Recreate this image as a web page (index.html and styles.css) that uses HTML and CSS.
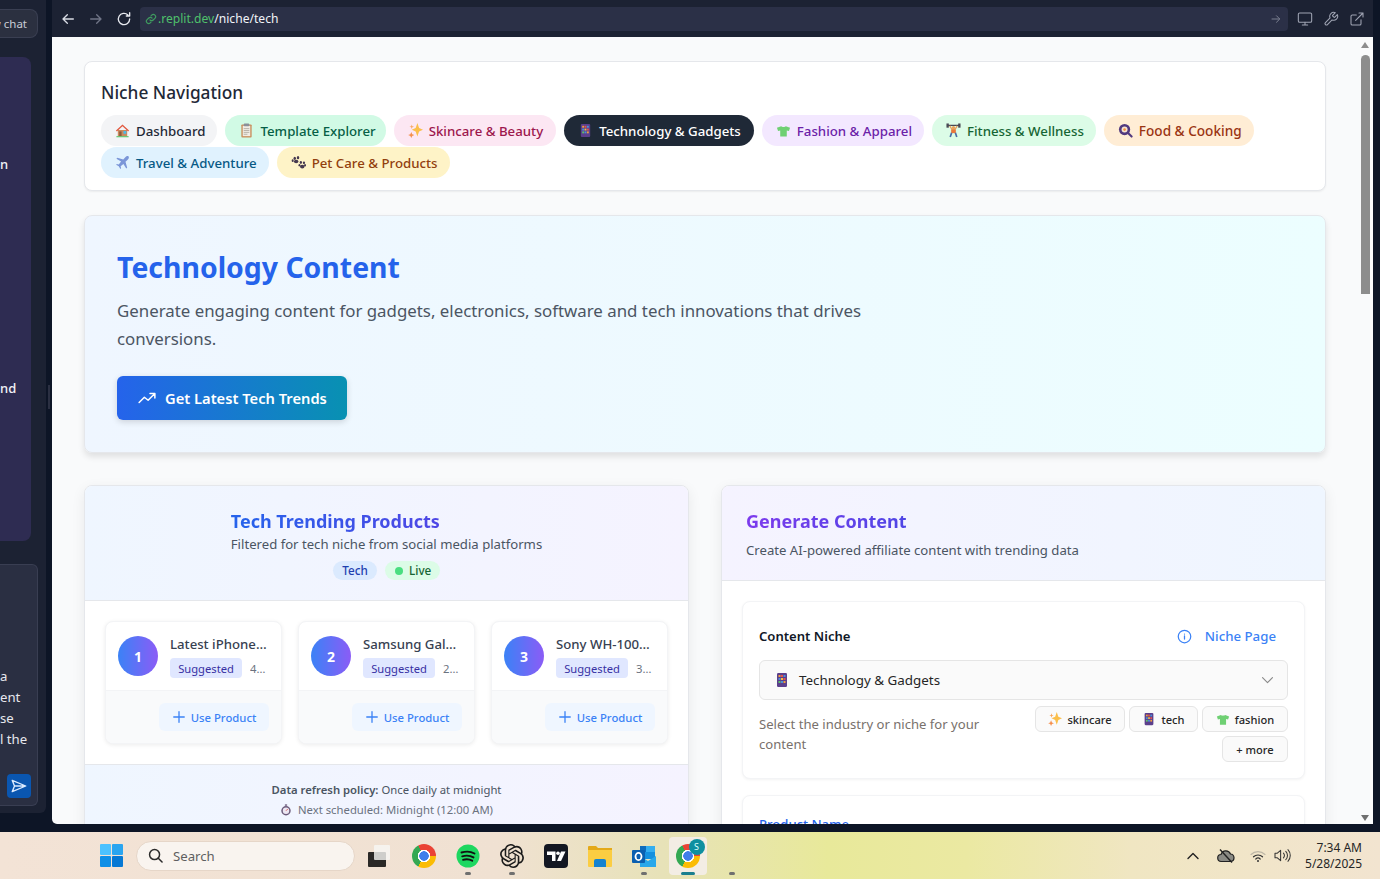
FILE: index.html
```html
<!DOCTYPE html>
<html lang="en">
<head>
<meta charset="utf-8">
<title>Technology Content</title>
<link rel="stylesheet" href="styles.css">
</head>
<body>
<svg class="defs" aria-hidden="true">
  <symbol id="e-house" viewBox="0 0 16 16"><path d="M3 7.5h10V14H3z" fill="#c98a5e"/><path d="M8 1.5 1 8l1 1 6-5.5L14 9l1-1z" fill="#e2593f"/><rect x="9" y="8.5" width="3" height="3" fill="#4cb8e8"/><rect x="4.5" y="9" width="2.5" height="5" fill="#8b5a3c"/><rect x="1.5" y="14" width="13" height="1.2" fill="#5cc46a"/></symbol>
  <symbol id="e-clip" viewBox="0 0 16 16"><rect x="2.5" y="1.5" width="11" height="14" rx="1" fill="#c9905f"/><rect x="4" y="3" width="8" height="11" fill="#f1ece4"/><rect x="5" y=".5" width="6" height="3" rx="1" fill="#8a8f99"/><path d="M5 6h6M5 8h6M5 10h6M5 12h4" stroke="#b5b0a8" stroke-width="1"/></symbol>
  <symbol id="e-spark" viewBox="0 0 16 16"><path d="M10 0 11.800 5.400 16 7.200 11.800 9 10 14.500 8.200 9 4 7.200 8.200 5.400z" fill="#fbbf4a"/><path d="M3.500 9.500 4.500 12l2.300.8-2.300 1-1 2.200-1-2.200-2.300-1 2.300-.8z" fill="#f58f4d"/><path d="M4 1.500l.6 1.900 1.900.6-1.900.6L4 6.500l-.6-1.900L1.500 4l1.900-.6z" fill="#f9a45c"/></symbol>
  <symbol id="e-tech" viewBox="0 0 16 16"><rect x="3" y="1" width="10" height="14" rx="1.200" fill="#5b3f8c"/><rect x="4.500" y="3" width="2" height="2" fill="#f0a03c"/><rect x="7" y="3" width="2" height="2" fill="#e5534b"/><rect x="9.500" y="3" width="2" height="2" fill="#4a90d9"/><rect x="4.500" y="6" width="2" height="2" fill="#4a90d9"/><rect x="7" y="6" width="2" height="2" fill="#f0c040"/><rect x="9.500" y="6" width="2" height="2" fill="#e5534b"/><rect x="4.500" y="9" width="2" height="2" fill="#5cc46a"/><rect x="7" y="9" width="2" height="2" fill="#4a90d9"/><rect x="9.500" y="9" width="2" height="2" fill="#f0a03c"/></symbol>
  <symbol id="e-shirt" viewBox="0 0 16 16"><path d="M5.500 3.500 1 5 2.200 8.500 4.500 8v6.500h7V8l2.300.5L15 5l-4.500-1.500c-.8 1-4.200 1-5 0z" fill="#6fd073"/></symbol>
  <symbol id="e-lift" viewBox="0 0 16 16"><path d="M1 2.500h14" stroke="#4a4a55" stroke-width="1.400"/><rect x="0.500" y="0.500" width="2.500" height="4.500" fill="#4a4a55"/><rect x="13" y="0.500" width="2.500" height="4.500" fill="#4a4a55"/><circle cx="8" cy="5" r="1.800" fill="#e8a25c"/><path d="M4 3l2.500 4h3L12 3" stroke="#e8a25c" stroke-width="1.400" fill="none"/><rect x="5.500" y="7" width="5" height="3.800" fill="#e9773c"/><path d="M6 10.500 4.500 15M10 10.500l1.500 4.500" stroke="#4a6ea8" stroke-width="1.800"/></symbol>
  <symbol id="e-pan" viewBox="0 0 16 16"><circle cx="7" cy="7" r="6" fill="#51397f"/><circle cx="7" cy="7" r="3.200" fill="#f4e3d0"/><circle cx="7" cy="7" r="1.400" fill="#f58f3d"/><path d="m11 11 3.500 3.500" stroke="#51397f" stroke-width="2.200" stroke-linecap="round"/></symbol>
  <symbol id="e-plane" viewBox="0 0 16 16"><path d="M14.500 1.500c-1-.8-2.500 0-3.500 1L8.800 4.800 2.500 3 1.500 4l5 3L4 10l-2-.5-.8.8 2.800 1.700L5.700 14.800l.8-.8-.5-2 3-2.500 3 5 1-1-1.800-6.300L13.500 5c1-1 1.800-2.500 1-3.500z" fill="#7b96d8"/></symbol>
  <symbol id="e-paw" viewBox="0 0 16 16"><g fill="#46394f"><ellipse cx="4" cy="3.500" rx="1.300" ry="1.700"/><ellipse cx="7.500" cy="2.800" rx="1.300" ry="1.700"/><ellipse cx="1.800" cy="6" rx="1.100" ry="1.400"/><ellipse cx="5.500" cy="7" rx="2.400" ry="1.900"/><ellipse cx="10.500" cy="8" rx="1.200" ry="1.500"/><ellipse cx="13.800" cy="8.300" rx="1.200" ry="1.500"/><ellipse cx="9" cy="10.800" rx="1" ry="1.300"/><ellipse cx="15" cy="11" rx="1" ry="1.300"/><ellipse cx="12" cy="12.300" rx="2.400" ry="2"/></g></symbol>
  <symbol id="e-watch" viewBox="0 0 16 16"><rect x="6.500" y="0.500" width="3" height="1.800" fill="#6b5b7b"/><circle cx="8" cy="9" r="6.300" fill="#6b5b7b"/><circle cx="8" cy="9" r="4.300" fill="#ece6f2"/><path d="M8 9 10.500 6.500" stroke="#d9534f" stroke-width="1.200"/></symbol>
</svg>

<div class="workspace">
  <aside class="rail">
    <div class="chat-btn"><span class="chat-label">New chat</span></div>
    <div class="rail-panel"><p class="rail-line rail-line-a">n</p><p class="rail-line rail-line-b">nd</p></div>
    <div class="rail-box">
      <p class="rail-text">a<br>ent<br>se<br>l the</p>
      <span class="send">
        <svg class="send-icon" viewBox="0 0 24 24" fill="none" stroke="#dbeafe" stroke-width="1.800" stroke-linejoin="round"><path d="M3 4.500 21 12 3 19.500 6 12zM6 12h15"/></svg>
      </span>
    </div>
  </aside>
  <div class="gutter"><span class="handle"></span></div>
  <main class="browser">
    <header class="toolbar">
      <svg class="tb-icon tb-back" viewBox="0 0 24 24" fill="none" stroke="#d8dbe4" stroke-width="2" stroke-linecap="round" stroke-linejoin="round"><path d="M20 12H5M11 5.500 4.500 12l6.500 6.500"/></svg>
      <svg class="tb-icon tb-fwd" viewBox="0 0 24 24" fill="none" stroke="#6f7486" stroke-width="2" stroke-linecap="round" stroke-linejoin="round"><path d="M4 12h15M13 5.500l6.500 6.500-6.500 6.500"/></svg>
      <svg class="tb-icon tb-reload" viewBox="0 0 24 24" fill="none" stroke="#e8eaf0" stroke-width="2" stroke-linecap="round" stroke-linejoin="round"><path d="M20.500 12a8.500 8.500 0 1 1-2.600-6.100M20.500 2.500v5h-5"/></svg>
      <div class="urlbar">
        <svg class="url-link" viewBox="0 0 24 24" fill="none" stroke="#3f9a5f" stroke-width="2.400" stroke-linecap="round"><path d="M10 14a4.500 4.500 0 0 0 6.400 0l3.400-3.400a4.500 4.500 0 0 0-6.400-6.400L12 5.600M14 10a4.500 4.500 0 0 0-6.400 0l-3.400 3.400a4.500 4.500 0 0 0 6.400 6.400l1.400-1.400"/></svg>
        <span class="url-host">.replit.dev</span><span class="url-path">/niche/tech</span>
        <svg class="url-go" viewBox="0 0 24 24" fill="none" stroke="#7a7f90" stroke-width="2" stroke-linecap="round" stroke-linejoin="round"><path d="M4 12h15M13 5.500l6.500 6.500-6.500 6.500"/></svg>
      </div>
      <svg class="tb-icon tb-tool" viewBox="0 0 24 24" fill="none" stroke="#9fa4b3" stroke-width="1.600" stroke-linecap="round" stroke-linejoin="round"><rect x="2" y="3" width="20" height="14" rx="2"/><path d="M12 17v4M8 21h8"/></svg>
      <svg class="tb-icon tb-tool" viewBox="0 0 24 24" fill="none" stroke="#9fa4b3" stroke-width="1.600" stroke-linecap="round" stroke-linejoin="round"><path d="M14.700 6.300a1 1 0 0 0 0 1.400l1.600 1.600a1 1 0 0 0 1.400 0l3.800-3.800a6 6 0 0 1-7.900 7.900l-6.900 6.900a2.100 2.100 0 0 1-3-3l6.900-6.900a6 6 0 0 1 7.900-7.900z"/></svg>
      <svg class="tb-icon tb-tool" viewBox="0 0 24 24" fill="none" stroke="#9fa4b3" stroke-width="1.600" stroke-linecap="round" stroke-linejoin="round"><path d="M18 13v6a2 2 0 0 1-2 2H5a2 2 0 0 1-2-2V8a2 2 0 0 1 2-2h6M15 3h6v6M10 14 21 3"/></svg>
    </header>

    <div class="page">
      <div class="content">
        <section class="nav-card">
          <h2 class="nav-title">Niche Navigation</h2>
          <nav class="pills">
            <a class="pill pill-gray"><svg class="emo"><use href="#e-house"/></svg>Dashboard</a>
            <a class="pill pill-teal"><svg class="emo"><use href="#e-clip"/></svg>Template Explorer</a>
            <a class="pill pill-pink"><svg class="emo"><use href="#e-spark"/></svg>Skincare &amp; Beauty</a>
            <a class="pill pill-dark"><svg class="emo"><use href="#e-tech"/></svg>Technology &amp; Gadgets</a>
            <a class="pill pill-purple"><svg class="emo"><use href="#e-shirt"/></svg>Fashion &amp; Apparel</a>
            <a class="pill pill-green"><svg class="emo"><use href="#e-lift"/></svg>Fitness &amp; Wellness</a>
            <a class="pill pill-orange"><svg class="emo"><use href="#e-pan"/></svg>Food &amp; Cooking</a>
            <a class="pill pill-blue"><svg class="emo"><use href="#e-plane"/></svg>Travel &amp; Adventure</a>
            <a class="pill pill-amber"><svg class="emo"><use href="#e-paw"/></svg>Pet Care &amp; Products</a>
          </nav>
        </section>

        <section class="hero">
          <h1 class="hero-title">Technology Content</h1>
          <p class="hero-text">Generate engaging content for gadgets, electronics, software and tech innovations that drives conversions.</p>
          <button class="hero-btn">
            <svg class="hero-icon" viewBox="0 0 24 24" fill="none" stroke="#fff" stroke-width="2" stroke-linecap="round" stroke-linejoin="round"><path d="m1.500 18 7-7 5 4 9-9M16 6h6.500v6"/></svg>
            Get Latest Tech Trends
          </button>
        </section>

        <div class="columns">
          <section class="panel">
            <header class="panel-head head-left">
              <div class="head-inner">
                <h3 class="panel-title title-blue">Tech Trending Products</h3>
                <p class="panel-sub">Filtered for tech niche from social media platforms</p>
              </div>
              <div class="tags">
                <span class="tag tag-tech">Tech</span>
                <span class="tag tag-live"><i class="live-dot"></i>Live</span>
              </div>
            </header>
            <div class="products">
              <article class="product">
                <div class="product-main">
                  <span class="rank">1</span>
                  <div class="product-info">
                    <div class="product-name">Latest iPhone 15 Pro Max</div>
                    <div class="product-meta"><span class="suggested">Suggested</span><span class="views">4.2M views</span></div>
                  </div>
                </div>
                <div class="product-foot"><button class="use-btn"><svg class="plus" viewBox="0 0 16 16" fill="none" stroke="#3b82f6" stroke-width="1.500" stroke-linecap="round"><path d="M8 2v12M2 8h12"/></svg>Use Product</button></div>
              </article>
              <article class="product">
                <div class="product-main">
                  <span class="rank">2</span>
                  <div class="product-info">
                    <div class="product-name">Samsung Galaxy S24 Ultra</div>
                    <div class="product-meta"><span class="suggested">Suggested</span><span class="views">2.8M views</span></div>
                  </div>
                </div>
                <div class="product-foot"><button class="use-btn"><svg class="plus" viewBox="0 0 16 16" fill="none" stroke="#3b82f6" stroke-width="1.500" stroke-linecap="round"><path d="M8 2v12M2 8h12"/></svg>Use Product</button></div>
              </article>
              <article class="product">
                <div class="product-main">
                  <span class="rank">3</span>
                  <div class="product-info">
                    <div class="product-name">Sony WH-1000XM5 Headphones</div>
                    <div class="product-meta"><span class="suggested">Suggested</span><span class="views">3.1M views</span></div>
                  </div>
                </div>
                <div class="product-foot"><button class="use-btn"><svg class="plus" viewBox="0 0 16 16" fill="none" stroke="#3b82f6" stroke-width="1.500" stroke-linecap="round"><path d="M8 2v12M2 8h12"/></svg>Use Product</button></div>
              </article>
            </div>
            <footer class="policy">
              <p class="policy-line"><b class="policy-b">Data refresh policy:</b> Once daily at midnight</p>
              <p class="policy-next"><svg class="emo-sm"><use href="#e-watch"/></svg>Next scheduled: Midnight (12:00 AM)</p>
            </footer>
          </section>

          <section class="panel">
            <header class="panel-head head-right">
              <h3 class="panel-title title-purple">Generate Content</h3>
              <p class="panel-sub sub-gap">Create AI-powered affiliate content with trending data</p>
            </header>
            <div class="form">
              <div class="field">
                <div class="field-top">
                  <span class="field-label">Content Niche</span>
                  <a class="niche-link"><svg class="info" viewBox="0 0 24 24" fill="none" stroke="#3b82f6" stroke-width="2" stroke-linecap="round"><circle cx="12" cy="12" r="10"/><path d="M12 16v-5M12 8h.01"/></svg>Niche Page</a>
                </div>
                <div class="select">
                  <svg class="emo-sel"><use href="#e-tech"/></svg>
                  <span class="select-text">Technology &amp; Gadgets</span>
                  <svg class="chev" viewBox="0 0 24 24" fill="none" stroke="#8a8a8a" stroke-width="1.600" stroke-linecap="round" stroke-linejoin="round"><path d="m5 8 7 7 7-7"/></svg>
                </div>
                <div class="field-bottom">
                  <p class="help">Select the industry or niche for your content</p>
                  <div class="quick">
                    <span class="chip chip-skin"><svg class="emo-chip"><use href="#e-spark"/></svg>skincare</span>
                    <span class="chip chip-tech"><svg class="emo-chip"><use href="#e-tech"/></svg>tech</span>
                    <span class="chip chip-fashion"><svg class="emo-chip"><use href="#e-shirt"/></svg>fashion</span>
                    <span class="chip chip-more">+ more</span>
                  </div>
                </div>
              </div>
              <div class="field">
                <span class="field-label label-blue">Product Name</span>
              </div>
            </div>
          </section>
        </div>
      </div>
      <div class="scrollbar">
        <span class="arrow-up"></span>
        <span class="thumb"></span>
        <span class="arrow-down"></span>
      </div>
    </div>
  </main>
</div>

<footer class="taskbar">
  <svg class="winlogo" viewBox="0 0 23 23"><rect width="11" height="11" rx="1" fill="#4cc2ff"/><rect x="12" width="11" height="11" rx="1" fill="#2aa5f0"/><rect y="12" width="11" height="11" rx="1" fill="#0f8fe6"/><rect x="12" y="12" width="11" height="11" rx="1" fill="#0678d4"/></svg>
  <div class="search">
    <svg class="search-icon" viewBox="0 0 24 24" fill="none" stroke="#2b2b2b" stroke-width="2.400" stroke-linecap="round"><circle cx="10.500" cy="10.500" r="8"/><path d="m16.500 16.500 6 6"/></svg>
    <span class="search-text">Search</span>
  </div>
  <svg class="taskview" viewBox="0 0 22 22"><rect x="0" y="7" width="18" height="15" rx="1" fill="#2a2826"/><rect x="6" y="0" width="16" height="15" rx="1" fill="#f7f7f5" opacity=".8"/></svg>
  <div class="apps">
    <div class="app"><span class="chrome"></span></div>
    <div class="app app-dot">
      <svg class="app-icon" viewBox="0 0 24 24"><circle cx="12" cy="12" r="11.500" fill="#1ed760"/><path d="M5.500 8.500c4.500-1.300 9.500-1 13 1M6.200 12.300c3.800-1 8-.8 11.300 1.100M7 15.800c3.200-.8 6.500-.6 9.200.9" stroke="#111" stroke-width="1.900" stroke-linecap="round" fill="none"/></svg>
    </div>
    <div class="app app-dot">
      <svg class="app-icon" viewBox="0 0 24 24"><path fill="#1b1b1b" d="M22.2819 9.8211a5.9847 5.9847 0 0 0-.5157-4.9108 6.0462 6.0462 0 0 0-6.5098-2.9A6.0651 6.0651 0 0 0 4.9807 4.1818a5.9847 5.9847 0 0 0-3.9977 2.9 6.0462 6.0462 0 0 0 .7427 7.0966 5.98 5.98 0 0 0 .511 4.9107 6.051 6.051 0 0 0 6.5146 2.9001A5.9847 5.9847 0 0 0 13.2599 24a6.0557 6.0557 0 0 0 5.7718-4.2058 5.9894 5.9894 0 0 0 3.9977-2.9001 6.0557 6.0557 0 0 0-.7475-7.0729zm-9.022 12.6081a4.4755 4.4755 0 0 1-2.8764-1.0408l.1419-.0804 4.7783-2.7582a.7948.7948 0 0 0 .3927-.6813v-6.7369l2.02 1.1686a.071.071 0 0 1 .038.052v5.5826a4.504 4.504 0 0 1-4.4945 4.4944zm-9.6607-4.1254a4.4708 4.4708 0 0 1-.5346-3.0137l.142.0852 4.783 2.7582a.7712.7712 0 0 0 .7806 0l5.8428-3.3685v2.3324a.0804.0804 0 0 1-.0332.0615L9.74 19.9502a4.4992 4.4992 0 0 1-6.1408-1.6464zM2.3408 7.8956a4.485 4.485 0 0 1 2.3655-1.9728V11.6a.7664.7664 0 0 0 .3879.6765l5.8144 3.3543-2.0201 1.1685a.0757.0757 0 0 1-.071 0l-4.8303-2.7865A4.504 4.504 0 0 1 2.3408 7.872zm16.5963 3.8558L13.1038 8.364 15.1192 7.2a.0757.0757 0 0 1 .071 0l4.8303 2.7913a4.4944 4.4944 0 0 1-.6765 8.1042v-5.6772a.79.79 0 0 0-.407-.667zm2.0107-3.0231l-.142-.0852-4.7735-2.7818a.7759.7759 0 0 0-.7854 0L9.409 9.2297V6.8974a.0662.0662 0 0 1 .0284-.0615l4.8303-2.7866a4.4992 4.4992 0 0 1 6.6802 4.66zM8.3065 12.863l-2.02-1.1638a.0804.0804 0 0 1-.038-.0567V6.0742a4.4992 4.4992 0 0 1 7.3757-3.4537l-.142.0805L8.704 5.459a.7948.7948 0 0 0-.3927.6813zm1.0976-2.3654l2.602-1.4998 2.6069 1.4998v2.9994l-2.5974 1.4997-2.6067-1.4997Z"/></svg>
    </div>
    <div class="app">
      <svg class="app-icon" viewBox="0 0 24 24"><rect width="24" height="24" rx="4" fill="#131722"/><path d="M3 7.500h8.500V17H8v-6H3z" fill="#fff"/><circle cx="14" cy="9.300" r="1.800" fill="#fff"/><path d="M17 7.500h4.500L17 17h-4z" fill="#fff"/></svg>
    </div>
    <div class="app">
      <svg class="app-icon" viewBox="0 0 24 24"><path d="M0 3a1 1 0 0 1 1-1h7l2 2h14v4H0z" fill="#e4a917"/><path d="M0 6h24v16a1 1 0 0 1-1 1H1a1 1 0 0 1-1-1z" fill="#fbcd42"/><path d="M6 17a2 2 0 0 1 2-2h8a2 2 0 0 1 2 2v6H6z" fill="#1483d0"/></svg>
    </div>
    <div class="app app-dot">
      <svg class="app-icon" viewBox="0 0 24 24"><path d="M8 2h15v13H8z" fill="#1490df"/><path d="M14 2h9v6h-9z" fill="#33aef0"/><path d="M8 2h6v6H8z" fill="#0f6cbd"/><path d="M8 12l8 5 8-5v11H8z" fill="#28a8ea"/><rect x="0" y="6" width="13" height="13" rx="1" fill="#0a5fb0"/><ellipse cx="6.500" cy="12.500" rx="3" ry="3.600" fill="none" stroke="#fff" stroke-width="1.800"/></svg>
    </div>
    <div class="app app-active">
      <span class="tile"><span class="chrome"></span><span class="bubble">S</span></span>
      <i class="active-bar"></i>
    </div>
    <div class="app app-dot"></div>
  </div>
  <div class="tray">
    <svg class="tray-chev" viewBox="0 0 12 8" fill="none" stroke="#222" stroke-width="1.400" stroke-linecap="round" stroke-linejoin="round"><path d="m1 6.500 5-5 5 5"/></svg>
    <svg class="tray-cloud" viewBox="0 0 18 16"><path d="M4.500 13.500a3.500 3.500 0 0 1-.5-7A5 5 0 0 1 13.500 6a3.800 3.800 0 0 1 .5 7.500z" fill="#8a8a84" stroke="#222" stroke-width="1.200"/><path d="m3 1.500 12 13" stroke="#222" stroke-width="1.400"/></svg>
    <svg class="tray-wifi" viewBox="0 0 16 14" fill="none" stroke-linecap="round"><path d="M1 5.500a10 10 0 0 1 14 0" stroke="#bdb6a6" stroke-width="1.100"/><path d="M3.500 7.800a6.500 6.500 0 0 1 9 0" stroke="#333" stroke-width="1.200"/><path d="M5.800 10a3.200 3.200 0 0 1 4.400 0" stroke="#333" stroke-width="1.200"/><circle cx="8" cy="12" r="1" fill="#333"/></svg>
    <svg class="tray-sound" viewBox="0 0 18 16" fill="none" stroke="#333" stroke-width="1.100" stroke-linecap="round" stroke-linejoin="round"><path d="M1 5.500v5h2.500l3.500 3V2.500L3.500 5.500zM10 5.500a3.500 3.500 0 0 1 0 5M12.500 3.500a6.500 6.500 0 0 1 0 9M14.800 1.800a9 9 0 0 1 0 12.400"/></svg>
    <div class="clock"><span>7:34 AM</span><span>5/28/2025</span></div>
  </div>
</footer>
</body>
</html>
```

FILE: styles.css
```css
* { box-sizing: border-box; }
html, body { margin: 0; padding: 0; }
body {
  width: 1380px; height: 879px; overflow: hidden;
  background: #0d1526;
  font-family: "Noto Sans", "Open Sans", sans-serif;
  display: flex; flex-direction: column;
  color: #1f2937;
}
p, h1, h2, h3 { margin: 0; }
button { font-family: inherit; border: 0; cursor: pointer; }
.defs { width: 0; height: 0; position: absolute; }

.workspace { height: 832px; display: flex; padding-bottom: 8px; flex: none; }

/* left rail */
.rail { width: 46px; height: 813px; background: #1c2233; border-bottom-right-radius: 6px; display: flex; flex-direction: column; padding-top: 9px; overflow: hidden; flex: none; }
.chat-btn { width: 38px; height: 29px; background: #2b3040; border: 1px solid #3a3f52; border-left: 0; border-radius: 0 8px 8px 0; display: flex; justify-content: flex-end; align-items: center; padding-right: 10px; overflow: hidden; flex: none; }
.chat-label { font-size: 11.500px; color: #c9ccd6; white-space: nowrap; flex: none; }
.rail-panel { width: 31px; height: 484px; margin-top: 19px; background: #2e2c52; border-radius: 0 8px 8px 0; flex: none; overflow: hidden; }
.rail-line { font-size: 13px; font-weight: 500; line-height: 20px; color: #f1f2f6; }
.rail-line-a { margin-top: 97px; }
.rail-line-b { margin-top: 204px; }
.rail-box { width: 38px; height: 242px; margin-top: 23px; background: #2a2f42; border: 1px solid #393e52; border-left: 0; border-radius: 0 6px 6px 0; flex: none; display: flex; flex-direction: column; }
.rail-text { font-size: 13.200px; line-height: 21px; color: #e7e8ee; margin-top: 101px; white-space: nowrap; }
.send { width: 24px; height: 24px; margin: 24px 0 0 7px; background: #0a56b0; border-radius: 4px; display: flex; align-items: center; justify-content: center; }
.send-icon { width: 18px; height: 18px; }
.gutter { width: 6px; padding: 385px 2px 0; flex: none; }
.handle { display: block; width: 2px; height: 24px; background: #2b3042; }

/* browser */
.browser { width: 1321px; display: flex; flex-direction: column; flex: none; }
.toolbar { height: 37px; background: #1c2233; display: flex; align-items: center; padding-left: 8px; flex: none; }
.tb-icon { width: 16px; height: 16px; flex: none; }
.tb-fwd { margin-left: 12px; }
.tb-reload { margin-left: 12px; }
.urlbar { width: 1148px; height: 24px; margin: 0 9px 0 8px; background: #2b3047; border-radius: 4px; display: flex; align-items: center; padding: 0 6px 0 5px; font-size: 12.100px; flex: none; }
.url-link { width: 12px; height: 12px; margin-right: 1px; flex: none; }
.url-host { color: #4fc16b; }
.url-path { color: #f2f4f8; }
.url-go { width: 12px; height: 12px; margin-left: auto; }
.tb-tool { margin-right: 10px; }

.page { flex: 1; min-height: 0; background: #f9fafb; display: flex; border-bottom-left-radius: 5px; overflow: hidden; }
.content { width: 1309px; padding: 24px 35px 0 32px; flex: none; }

/* scrollbar */
.scrollbar { width: 12px; display: flex; flex-direction: column; align-items: flex-start; padding-top: 5px; flex: none; }
.arrow-up { width: 0; height: 0; border-left: 4.500px solid transparent; border-right: 4.500px solid transparent; border-bottom: 6px solid #8d8d8d; }
.thumb { display: block; width: 9px; height: 239px; margin-top: 7px; background: #8d8d8d; border-radius: 5px 5px 0 0; }
.arrow-down { width: 0; height: 0; margin-top: auto; margin-bottom: 3px; border-left: 4.500px solid transparent; border-right: 4.500px solid transparent; border-top: 6px solid #6f6f6f; }

/* nav */
.nav-card { height: 130px; background: #fff; border: 1px solid #e5e7eb; border-radius: 8px; padding: 16px 16px 12px; box-shadow: 0 1px 2px rgba(0,0,0,.06); }
.nav-title { height: 28px; padding-top: 1px; font-size: 17.300px; font-weight: 500; line-height: 28px; color: #1f2937; margin-bottom: 9px; }
.pills { display: flex; flex-wrap: wrap; gap: 1px 8px; }
.pill { height: 31px; border-radius: 16px; padding: 0 12px 0 14px; display: flex; align-items: center; font-size: 13.250px; font-weight: 500; white-space: nowrap; }
.emo { width: 15px; height: 15px; margin-right: 6px; flex: none; }
.pill-gray { background: #f3f4f6; color: #1f2937; }
.pill-teal { background: #d1fae5; color: #065f46; padding-right: 10px; }
.pill-pink { background: #fce7f3; color: #9d174d; padding-right: 13px; }
.pill-dark { background: #1f2937; color: #fff; padding-right: 13px; }
.pill-purple { background: #f3e8ff; color: #6b21a8; }
.pill-green { background: #dcfce7; color: #166534; }
.pill-orange { background: #ffedd5; color: #9a3412; font-size: 13.600px; }
.pill-blue { background: #e0f2fe; color: #075985; }
.pill-amber { background: #fef3c7; color: #92400e; }

/* hero */
.hero { height: 238px; margin-top: 24px; padding: 32px; background: linear-gradient(90deg, #eff6ff, #ecfeff); border: 1px solid #e5e7eb; border-radius: 8px; box-shadow: 0 4px 6px rgba(0,0,0,.1); }
.hero-title { font-size: 28.400px; line-height: 36px; font-weight: 700; color: #2563eb; margin-bottom: 13px; padding-top: 1px; height: 36px; }
.hero-text { width: 768px; font-size: 16.850px; line-height: 28px; color: #4b5563; margin-bottom: 23px; }
.hero-btn { width: 230px; height: 44px; border-radius: 6px; background: linear-gradient(90deg, #2563eb, #0891b2); color: #fff; font-size: 14.700px; font-weight: 600; display: flex; align-items: center; padding: 0 0 0 21px; box-shadow: 0 2px 6px rgba(0,0,0,.15); }
.hero-icon { width: 18px; height: 18px; margin-right: 9px; }

/* columns */
.columns { display: grid; grid-template-columns: 605px 605px; gap: 32px; margin-top: 32px; }
.panel { background: #fff; border: 1px solid #e5e7eb; border-radius: 8px; box-shadow: 0 4px 14px rgba(0,0,0,.07); height: 420px; overflow: hidden; }
.panel-head { border-bottom: 1px solid #e5e7eb; }
.head-left { height: 115px; padding-top: 22px; display: flex; flex-direction: column; align-items: center; background: linear-gradient(90deg, #eff6ff, #f5f3ff); }
.head-inner { display: inline-block; }
.head-right { height: 95px; padding: 22px 24px 0; background: linear-gradient(90deg, #f5f3ff, #eff6ff); }
.panel-title { font-size: 18px; line-height: 26px; font-weight: 700; color: transparent; -webkit-background-clip: text; background-clip: text; width: max-content; }
.title-blue { background-image: linear-gradient(90deg, #2563eb, #4f46e5); }
.title-purple { background-image: linear-gradient(90deg, #7c3aed, #4f46e5); }
.panel-sub { font-size: 13.150px; line-height: 20px; color: #4b5563; }
.sub-gap { margin-top: 6px; }
.tags { display: flex; gap: 8px; margin-top: 7px; }
.tag { height: 19px; border-radius: 10px; font-size: 11.700px; line-height: 19px; display: flex; align-items: center; font-weight: 500; }
.tag-tech { width: 44px; justify-content: center; background: #dbeafe; color: #1e40af; }
.tag-live { width: 55px; padding-left: 10px; background: #dcfce7; color: #166534; }
.live-dot { width: 8px; height: 8px; border-radius: 50%; background: #4ade80; margin-right: 6px; }

/* products */
.products { display: grid; grid-template-columns: repeat(3, 177px); gap: 16px; padding: 20px; border-bottom: 1px solid #e5e7eb; }
.product { height: 123px; background: #fff; border: 1px solid #f3f4f6; border-radius: 8px; box-shadow: 0 1px 4px rgba(0,0,0,.08); overflow: hidden; }
.product-main { height: 68px; padding: 0 12px; display: flex; align-items: center; gap: 12px; }
.rank { width: 40px; height: 40px; border-radius: 50%; background: linear-gradient(90deg, #3b82f6, #8b5cf6); color: #fff; font-size: 14px; font-weight: 700; display: flex; align-items: center; justify-content: center; flex: none; }
.product-info { flex: 1; min-width: 0; }
.product-name { font-size: 13.200px; font-weight: 500; line-height: 20px; color: #374151; white-space: nowrap; overflow: hidden; text-overflow: ellipsis; margin-bottom: 4px; }
.product-meta { display: flex; align-items: center; gap: 8px; padding-right: 2px; }
.suggested { width: 72px; height: 20px; background: #e0e7ff; color: #3730a3; border-radius: 4px; font-size: 11.200px; line-height: 22px; text-align: center; flex: none; }
.views { font-size: 11.300px; color: #6b7280; white-space: nowrap; overflow: hidden; text-overflow: ellipsis; min-width: 0; flex: 1; }
.product-foot { height: 54px; background: #f9fafb; border-top: 1px solid #f3f4f6; padding: 12px; display: flex; justify-content: flex-end; }
.use-btn { width: 110px; height: 28px; background: #eff6ff; color: #3b82f6; border-radius: 6px; font-size: 11.300px; font-weight: 500; display: flex; align-items: center; justify-content: center; }
.plus { width: 14px; height: 14px; margin-right: 5px; }

.policy { height: 100px; padding-top: 15px; background: linear-gradient(90deg, #eff6ff, #f5f3ff); text-align: center; font-size: 11.300px; line-height: 20px; color: #4b5563; }
.policy-b { font-weight: 600; }
.policy-next { color: #6b7280; display: flex; justify-content: center; align-items: center; }
.emo-sm { width: 12px; height: 12px; margin-right: 6px; }

/* form */
.form { padding: 20px; }
.field { background: #fff; border: 1px solid #f3f4f6; border-radius: 8px; padding: 16px; box-shadow: 0 1px 3px rgba(0,0,0,.05); margin-bottom: 16px; }
.field-top { height: 36px; display: flex; align-items: center; justify-content: space-between; margin-bottom: 6px; padding-right: 12px; }
.field-label { font-size: 13.100px; font-weight: 600; line-height: 20px; color: #111827; }
.label-blue { color: #2563eb; font-weight: 500; }
.niche-link { display: flex; align-items: center; font-size: 13.250px; font-weight: 500; color: #3b82f6; }
.info { width: 15px; height: 15px; margin-right: 13px; }
.select { height: 40px; background: #fafafa; border: 1px solid #e5e5e5; border-radius: 6px; display: flex; align-items: center; padding: 0 11px 0 14px; font-size: 13.400px; color: #262626; }
.emo-sel { width: 16px; height: 16px; margin-right: 9px; }
.select-text { flex: 1; }
.chev { width: 17px; height: 17px; }
.field-bottom { display: flex; margin-top: 6px; justify-content: space-between; }
.help { width: 245px; margin-top: 8px; font-size: 13.100px; line-height: 20px; color: #78716c; }
.quick { width: 253px; display: flex; flex-wrap: wrap; justify-content: flex-end; gap: 4px; }
.chip { height: 26px; background: #fafafa; border: 1px solid #e5e5e5; border-radius: 6px; font-size: 11.100px; font-weight: 500; display: flex; align-items: center; justify-content: center; color: #262626; }
.chip-skin { width: 90px; }
.chip-tech { width: 69px; }
.chip-fashion { width: 86px; }
.chip-more { width: 66px; }
.emo-chip { width: 14px; height: 14px; margin-right: 5px; }

/* taskbar */
.taskbar { height: 47px; flex: none; display: flex; align-items: center; padding: 0 18px 0 100px; background: linear-gradient(90deg, #f3e3d6 0%, #f0e1d2 36%, #e7e2b8 48%, #e8e99a 60%, #ebe9a2 70%, #f0e6c2 82%, #f2e4d0 100%); }
.winlogo { width: 23px; height: 23px; flex: none; }
.search { width: 219px; height: 30px; margin-left: 13px; background: #f9f4ef; border: 1px solid #e6d6c8; border-radius: 15px; display: flex; align-items: center; padding-left: 11px; flex: none; }
.search-icon { width: 15px; height: 15px; margin-right: 10px; }
.search-text { font-size: 13.200px; color: #5f5f5f; }
.taskview { width: 22px; height: 22px; margin-left: 13px; flex: none; }
.apps { display: flex; margin-left: 12px; }
.app { width: 44px; height: 47px; display: flex; align-items: center; justify-content: center; position: relative; }
.app-icon { width: 24px; height: 24px; }
.app-dot::after { content: ""; position: absolute; left: 19px; bottom: 4px; width: 6px; height: 3px; border-radius: 2px; background: #6f6f6f; }
.chrome { display: block; width: 24px; height: 24px; border-radius: 50%; background: radial-gradient(circle, #3f7fea 0 4.500px, #fff 5px 6px, transparent 6.500px), conic-gradient(#ea4335 0 90deg, #fbbc04 90deg 210deg, #34a853 210deg 330deg, #ea4335 330deg); }
.tile { width: 38px; height: 38px; margin-left: -1px; background: #f3ede4; border-radius: 4px; display: flex; align-items: center; justify-content: center; position: relative; }
.bubble { position: absolute; right: 2px; top: 2px; width: 16px; height: 16px; border-radius: 50%; background: #0e8fa0; color: #dff; font-size: 9px; line-height: 16px; text-align: center; }
.active-bar { position: absolute; left: 15px; bottom: 4px; width: 14px; height: 3px; border-radius: 2px; background: #1a7f8e; }
.tray { margin-left: auto; display: flex; align-items: center; }
.tray-chev { width: 12px; height: 8px; margin-right: 18px; }
.tray-cloud { width: 18px; height: 16px; margin-right: 15px; }
.tray-wifi { width: 16px; height: 14px; margin-right: 8px; }
.tray-sound { width: 17px; height: 15px; margin-right: 14px; }
.clock { display: flex; flex-direction: column; align-items: flex-end; font-size: 12px; line-height: 16px; color: #262626; }
```
